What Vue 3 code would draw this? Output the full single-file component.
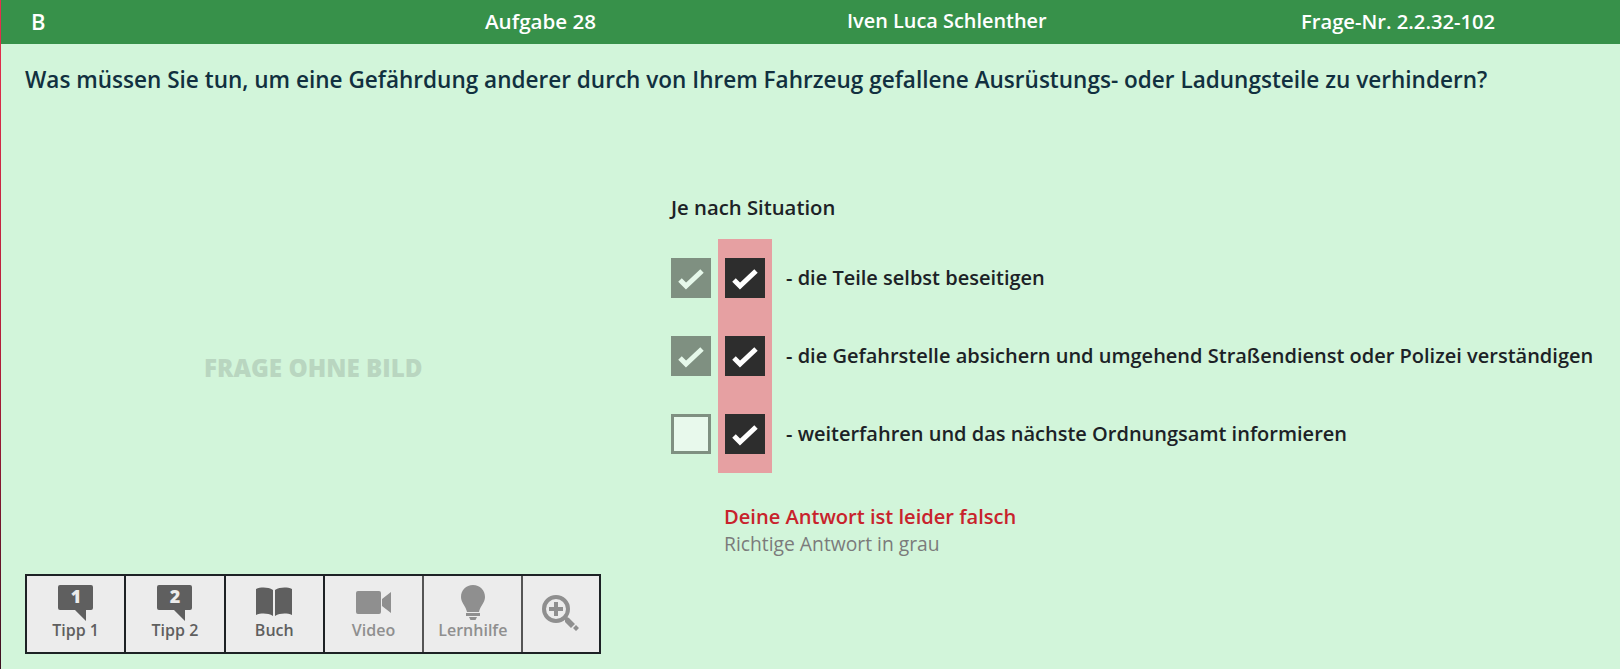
<script setup>
const answers = [
  { text: '- die Teile selbst beseitigen', correct: true },
  { text: '- die Gefahrstelle absichern und umgehend Straßendienst oder Polizei verständigen', correct: true },
  { text: '- weiterfahren und das nächste Ordnungsamt informieren', correct: false },
]
</script>

<template>
  <div class="page">
    <header class="topbar">
      <span class="class-name">B</span>
      <span class="task">Aufgabe 28</span>
      <span class="user">Iven Luca Schlenther</span>
      <span class="number">Frage-Nr. 2.2.32-102</span>
    </header>

    <h1 class="question">
      Was müssen Sie tun, um eine Gefährdung anderer durch von Ihrem Fahrzeug gefallene Ausrüstungs- oder Ladungsteile zu verhindern?
    </h1>

    <main class="content">
      <section class="left">
        <div class="no-image">FRAGE OHNE BILD</div>
        <div class="tools">
          <button class="tool" type="button">
            <svg class="icon" viewBox="0 0 36 36" width="36" height="36">
              <path class="dark" d="M2 0h31a2 2 0 0 1 2 2v21a2 2 0 0 1-2 2h-5v11L17 25H2a2 2 0 0 1-2-2V2a2 2 0 0 1 2-2z" />
              <text x="18" y="18" class="num">1</text>
            </svg>
            <span>Tipp 1</span>
          </button>
          <button class="tool" type="button">
            <svg class="icon" viewBox="0 0 36 36" width="36" height="36">
              <path class="dark" d="M2 0h31a2 2 0 0 1 2 2v21a2 2 0 0 1-2 2h-5v11L17 25H2a2 2 0 0 1-2-2V2a2 2 0 0 1 2-2z" />
              <text x="18" y="18" class="num">2</text>
            </svg>
            <span>Tipp 2</span>
          </button>
          <button class="tool" type="button">
            <svg class="icon" viewBox="0 0 36 36" width="36" height="36">
              <path class="dark" d="M0 4c5-2 12-2 17 1v26c-5-3-12-3-17-1zM36 4c-5-2-12-2-17 1v26c5-3 12-3 17-1z" />
            </svg>
            <span>Buch</span>
          </button>
          <button class="tool off" type="button">
            <svg class="icon" viewBox="0 0 36 36" width="36" height="36">
              <path class="grey" d="M2 6h21a2 2 0 0 1 2 2v19a2 2 0 0 1-2 2H2a2 2 0 0 1-2-2V8a2 2 0 0 1 2-2zM26 14l9-7v21l-9-7z" />
            </svg>
            <span>Video</span>
          </button>
          <button class="tool off" type="button">
            <svg class="icon" viewBox="0 0 36 36" width="36" height="36">
              <path class="grey" d="M18 0c7 0 12 5 12 12 0 6-5 9-6 15H12C11 21 6 18 6 12 6 5 11 0 18 0zM11 28h14v3H11zM14 32h8l-1.500 3h-5z" />
            </svg>
            <span>Lernhilfe</span>
          </button>
          <button class="tool off zoom" type="button">
            <svg viewBox="0 0 38 38" width="38" height="38">
              <circle class="ring" cx="14" cy="14" r="12" />
              <path class="grey" d="M12 7h4v5h5v4h-5v5h-4v-5H7v-4h5z" />
              <path class="grey" d="M23 24l2-2 2 1 6 6-4 4-6-6zM34 30l3 3-3 3-3-3z" />
            </svg>
          </button>
        </div>
      </section>

      <section class="right">
        <p class="intro">Je nach Situation</p>
        <div class="answers">
          <div class="col">
            <span
              v-for="(answer, index) in answers"
              :key="`solution-${index}`"
              class="box solution"
              :class="{ empty: !answer.correct }"
            >
              <svg v-if="answer.correct" viewBox="0 0 40 40" width="40" height="40">
                <path d="M9 22l6 6 16-15" />
              </svg>
            </span>
          </div>
          <div class="col wrong">
            <span v-for="(answer, index) in answers" :key="`given-${index}`" class="box given">
              <svg viewBox="0 0 40 40" width="40" height="40">
                <path d="M9 22l6 6 16-15" />
              </svg>
            </span>
          </div>
          <div class="col labels">
            <span v-for="(answer, index) in answers" :key="`label-${index}`" class="label">{{ answer.text }}</span>
          </div>
        </div>
        <div class="result">
          <p class="bad">Deine Antwort ist leider falsch</p>
          <p class="hint">Richtige Antwort in grau</p>
        </div>
      </section>
    </main>
  </div>
</template>

<style>
html,
body {
  margin: 0;
  background: #d2f5da;
}
</style>

<style scoped>
.page {
  height: 669px;
  box-sizing: border-box;
  border-left: 1px solid;
  border-image: linear-gradient(#e8304e, #b01c38 55%, #3a1020) 1;
  background: #d2f5da;
  font-family: "Open Sans", "Noto Sans", sans-serif;
  display: flex;
  flex-direction: column;
  overflow: hidden;
}

.topbar {
  height: 44px;
  box-sizing: border-box;
  flex: none;
  background: #37914a;
  color: #fff;
  font-size: 20.2px;
  font-weight: 600;
  display: grid;
  grid-template-columns: 454px 362px 454px 1fr;
  align-items: center;
  padding: 0 0 3px 30px;
}

.class-name {
  font-size: 22px;
}

.task {
  font-size: 20.6px;
}

.user {
  font-size: 19.9px;
}

.question {
  margin: 0 0 3px;
  padding: 22px 0 0 24px;
  font-size: 22.56px;
  line-height: 27px;
  font-weight: 600;
  color: #11303f;
  white-space: nowrap;
}

.content {
  flex: 1;
  display: flex;
  min-height: 0;
}

.left {
  width: 670px;
  flex: none;
  box-sizing: border-box;
  padding-left: 24px;
  display: flex;
  flex-direction: column;
}

.no-image {
  margin: 258px 0 0 179px;
  font-size: 24.2px;
  line-height: 28px;
  font-weight: 800;
  color: #b9d6c0;
  white-space: nowrap;
}

.tools {
  margin-top: 192px;
  display: flex;
  width: max-content;
  border: 2px solid #1d2225;
}

.tool {
  width: 99.3px;
  height: 76px;
  padding: 9px 0 0;
  border: 0;
  border-right: 2px solid #1d2225;
  background: #ececec;
  font: 600 16px/20px "Open Sans", sans-serif;
  color: #5f5f5f;
  display: flex;
  flex-direction: column;
  align-items: center;
}

.tool span {
  margin-top: -1px;
}

.tool.off {
  color: #8f8f8f;
  border-right-color: #555;
}

.tool.zoom {
  width: 75.5px;
  padding-top: 19px;
  border-right: 0;
}

.icon {
  display: block;
  flex: none;
}

.dark {
  fill: #5f5f5f;
}

.grey {
  fill: #8f8f8f;
}

.ring {
  fill: none;
  stroke: #8f8f8f;
  stroke-width: 4;
}

.num {
  font: 800 18px "Open Sans", sans-serif;
  fill: #ececec;
  text-anchor: middle;
}

.right {
  min-width: 0;
  color: #1c2226;
}

.intro {
  margin: 0;
  padding-top: 98px;
  font-size: 20.3px;
  line-height: 26px;
  font-weight: 600;
  white-space: nowrap;
}

.answers {
  display: flex;
  margin-top: 19px;
}

.col {
  display: flex;
  flex-direction: column;
  gap: 38px;
  padding: 19px 0;
}

.wrong {
  margin-left: 7px;
  padding: 19px 7px;
  background: #e6a0a2;
}

.labels {
  margin-left: 14px;
}

.box {
  width: 40px;
  height: 40px;
  box-sizing: border-box;
  display: block;
}

.box svg {
  display: block;
}

.box path {
  fill: none;
  stroke-width: 5;
}

.solution {
  background: #7f9081;
}

.solution path {
  stroke: #e6f8ea;
}

.solution.empty {
  background: #e8f9ec;
  border: 3px solid #7f9081;
}

.given {
  background: #2d2d2d;
}

.given path {
  stroke: #fff;
}

.label {
  height: 40px;
  box-sizing: border-box;
  padding-bottom: 2px;
  display: flex;
  align-items: center;
  font-size: 20px;
  font-weight: 600;
  white-space: nowrap;
}

.result {
  margin: 29px 0 0 53px;
}

.result p {
  margin: 0;
  white-space: nowrap;
}

.bad {
  font-size: 20.1px;
  line-height: 29px;
  font-weight: 600;
  color: #c8232c;
}

.hint {
  font-size: 19.3px;
  line-height: 26px;
  color: #7b7b7b;
}
</style>
